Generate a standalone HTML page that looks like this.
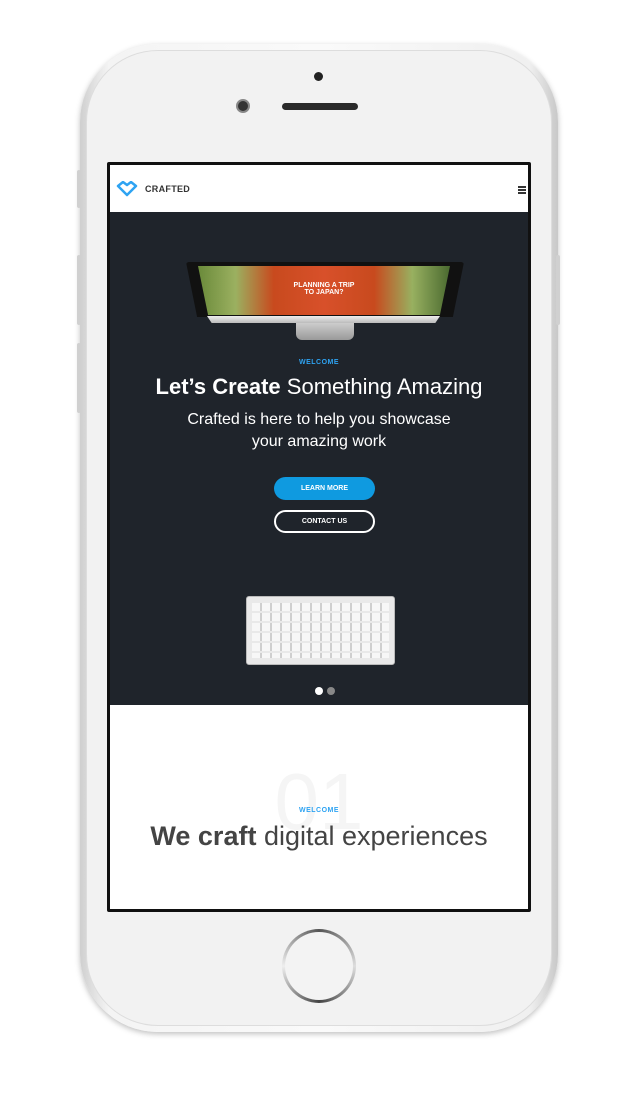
<!DOCTYPE html><html><head><style>
*{margin:0;padding:0;box-sizing:border-box}
body{width:635px;height:1093px;background:#fff;position:relative;overflow:hidden;font-family:"Liberation Sans",sans-serif}
.abs{position:absolute}
</style></head><body>
<div class="abs" style="left:80px;top:44px;width:478px;height:988px;border-radius:78px;background:linear-gradient(90deg,#cfcfcf,#f4f4f4 6%,#fafafa 50%,#f0f0f0 94%,#c8c8c8);box-shadow:0 2px 6px rgba(0,0,0,.25)"></div>
<div class="abs" style="left:86px;top:50px;width:466px;height:976px;border-radius:72px;background:#f2f2f2;border:1px solid #ddd"></div>
<div class="abs" style="left:77px;top:170px;width:4px;height:38px;background:#d0d0d0;border-radius:2px"></div>
<div class="abs" style="left:77px;top:255px;width:4px;height:70px;background:#d0d0d0;border-radius:2px"></div>
<div class="abs" style="left:77px;top:343px;width:4px;height:70px;background:#d0d0d0;border-radius:2px"></div>
<div class="abs" style="left:556px;top:255px;width:4px;height:70px;background:#d0d0d0;border-radius:2px"></div>
<div class="abs" style="left:314px;top:72px;width:9px;height:9px;border-radius:50%;background:#222"></div>
<div class="abs" style="left:236px;top:99px;width:14px;height:14px;border-radius:50%;background:#333;border:2px solid #888"></div>
<div class="abs" style="left:282px;top:103px;width:76px;height:7px;border-radius:4px;background:#2a2a2a"></div>
<div class="abs" style="left:282px;top:929px;width:74px;height:74px;border-radius:50%;background:conic-gradient(#555,#ddd,#444,#eee,#555);"></div>
<div class="abs" style="left:285px;top:932px;width:68px;height:68px;border-radius:50%;background:#f3f3f3"></div>
<div class="abs" style="left:107px;top:162px;width:424px;height:750px;background:#111;border-radius:2px"></div>
<div class="abs" style="left:110px;top:165px;width:418px;height:744px;background:#fff;overflow:hidden">
 <svg class="abs" style="left:6px;top:16px" width="22" height="16" viewBox="0 0 22 16"><path d="M2 5 L7 1 L11 4 L15 1 L20 5 L11 14 Z" fill="none" stroke="#2ea3f2" stroke-width="2.5" stroke-linejoin="round"/></svg>
 <div class="abs" style="left:35px;top:19px;font-size:9px;font-weight:bold;color:#333;letter-spacing:.3px">CRAFTED</div>
 <div class="abs" style="left:408px;top:21px;width:8px;height:2px;background:#333"></div>
 <div class="abs" style="left:408px;top:24px;width:8px;height:2px;background:#333"></div>
 <div class="abs" style="left:408px;top:27px;width:8px;height:2px;background:#333"></div>
 <div class="abs" style="left:0;top:47px;width:418px;height:493px;background:#1f242b">
  <div class="abs" style="left:76px;top:50px;width:278px;height:55px;background:#111;clip-path:polygon(0 0,100% 0,96% 100%,4% 100%);border-radius:3px"></div>
  <div class="abs" style="left:88px;top:54px;width:252px;height:49px;clip-path:polygon(0 0,100% 0,96% 100%,4% 100%);background:linear-gradient(90deg,#6a8a3a,#9bb060 15%,#c84a1e 30%,#d8502a 50%,#c84a1e 70%,#98b060 85%,#4a6a30);"><div style="margin:16px auto 0;width:120px;text-align:center;color:#fff;font-size:7px;font-weight:bold;line-height:7px">PLANNING A TRIP<br>TO JAPAN?</div></div>
  <div class="abs" style="left:97px;top:104px;width:233px;height:7px;background:linear-gradient(#eee,#bbb);clip-path:polygon(0 0,100% 0,98% 100%,2% 100%)"></div>
  <div class="abs" style="left:186px;top:111px;width:58px;height:17px;background:linear-gradient(#ccc,#999);border-radius:0 0 6px 6px"></div>
  <div class="abs" style="left:0;top:147px;width:418px;text-align:center;font-size:7px;font-weight:bold;color:#2ea3f2;letter-spacing:.5px">WELCOME</div>
  <div class="abs" style="left:0;top:162px;width:418px;text-align:center;font-size:22px;color:#fff"><b>Let’s Create</b> Something Amazing</div>
  <div class="abs" style="left:0;top:197px;width:418px;text-align:center;font-size:16px;line-height:22px;color:#fff">Crafted is here to help you showcase<br>your amazing work</div>
  <div class="abs" style="left:164px;top:265px;width:101px;height:23px;border-radius:12px;background:#0f9ae0;color:#fff;font-size:7px;font-weight:bold;text-align:center;line-height:23px">LEARN MORE</div>
  <div class="abs" style="left:164px;top:298px;width:101px;height:23px;border-radius:12px;border:2px solid #fff;color:#fff;font-size:7px;font-weight:bold;text-align:center;line-height:19px">CONTACT US</div>
  <div class="abs" style="left:136px;top:384px;width:149px;height:69px;border-radius:3px;background:#e9e9e9;border:1px solid #bbb;padding:6px 5px">
   <div style="width:100%;height:100%;background:repeating-linear-gradient(90deg,#f7f7f7 0 8px,#cfcfcf 8px 10px),#f7f7f7;-webkit-mask:repeating-linear-gradient(#000 0 8px,transparent 8px 10px);mask:repeating-linear-gradient(#000 0 8px,transparent 8px 10px)"></div>
  </div>
  <div class="abs" style="left:205px;top:475px;width:8px;height:8px;border-radius:50%;background:#fff"></div>
  <div class="abs" style="left:217px;top:475px;width:8px;height:8px;border-radius:50%;background:#888"></div>
 </div>
 <div class="abs" style="left:0;top:597px;width:418px;text-align:center;font-size:80px;color:#f5f5f5;line-height:80px">01</div>
 <div class="abs" style="left:0;top:642px;width:418px;text-align:center;font-size:7px;font-weight:bold;color:#2ea3f2;letter-spacing:.5px">WELCOME</div>
 <div class="abs" style="left:0;top:656px;width:418px;text-align:center;font-size:27px;color:#444"><b>We craft</b> digital experiences</div>
</div>
</body></html>
